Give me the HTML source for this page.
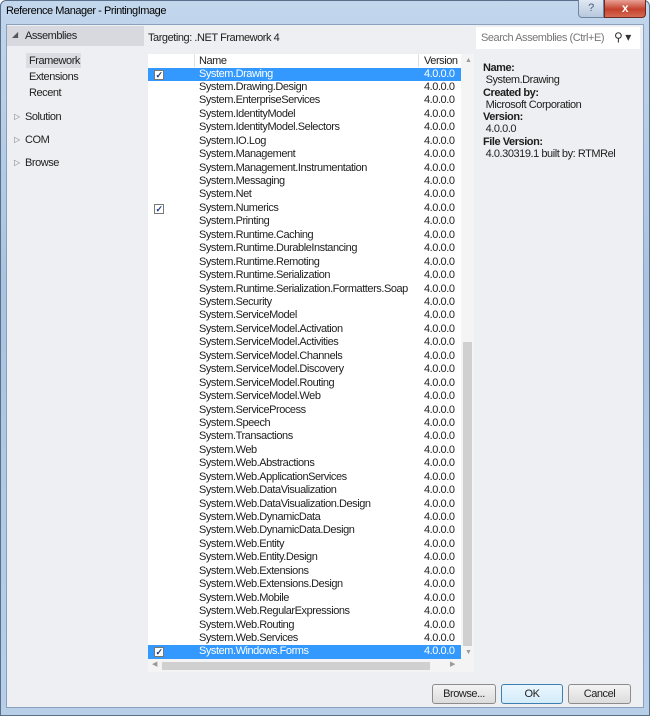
<!DOCTYPE html>
<html><head><meta charset="utf-8"><style>
*{margin:0;padding:0;box-sizing:border-box}
body{width:650px;height:716px;overflow:hidden;font-family:"Liberation Sans",sans-serif;font-size:11px;color:#1e1e1e;letter-spacing:-0.45px}
.frame{position:absolute;left:0;top:0;width:650px;height:716px;background:linear-gradient(#c2d6ec,#a9c3e0 40%,#b8cfe8);border:1px solid #5a6f8a;border-radius:6px 6px 0 0}
.title{position:absolute;left:6px;top:5px;font-size:11px;color:#000}
.help{position:absolute;left:578px;top:0;width:26px;height:18px;background:linear-gradient(#dfe8f3,#b7c8dd);border:1px solid #6e85a3;border-top:none;border-radius:0 0 0 4px;text-align:center;color:#4a5d75;font-size:11px;line-height:17px}
.close{position:absolute;left:604px;top:0;width:42px;height:18px;background:linear-gradient(#e9a196,#c4412c 55%,#d56a52);border:1px solid #6b2a22;border-top:none;border-radius:0 0 4px 0;text-align:center;color:#fff;font-weight:bold;font-size:12px;line-height:17px}
.client{position:absolute;left:6px;top:24px;width:638px;height:684px;background:#eeeff2;border:1px solid #8aa0bd}
.abs{position:absolute}
.row{position:absolute;left:148px;width:313px;height:13.44px;line-height:13.44px}
.row .n{position:absolute;left:51px}
.row .v{position:absolute;left:276px}
.sel{background:#3399ff;color:#fff}
.cb{position:absolute;left:6px;top:2px;width:10px;height:10px;background:#fff;border:1px solid #777;font-size:9px;line-height:8px;text-align:center;color:#1a3a8a;font-weight:bold}
.btn{position:absolute;top:684px;height:20px;border:1px solid #8c8c8c;border-radius:3px;background:linear-gradient(#f4f4f4,#dcdcdc);text-align:center;line-height:18px}
</style></head><body>
<div class="frame"></div>
<div class="title">Reference Manager - PrintingImage</div>
<div class="help">?</div>
<div class="close">x</div>
<div class="client"></div>
<div class="abs" style="left:7px;top:26px;width:137px;height:20px;background:#d7d9df"></div>
<div class="abs" style="left:12px;top:30px;font-size:8px;color:#555">◢</div>
<div class="abs" style="left:25px;top:30px">Assemblies</div>
<div class="abs" style="left:26px;top:53px;width:55px;height:15px;background:#dcdde2"></div>
<div class="abs" style="left:29px;top:55px">Framework</div>
<div class="abs" style="left:29px;top:71px">Extensions</div>
<div class="abs" style="left:29px;top:87px">Recent</div>
<div class="abs" style="left:14px;top:112px;font-size:8px;color:#777">▷</div>
<div class="abs" style="left:25px;top:111px">Solution</div>
<div class="abs" style="left:14px;top:135px;font-size:8px;color:#777">▷</div>
<div class="abs" style="left:25px;top:134px">COM</div>
<div class="abs" style="left:14px;top:158px;font-size:8px;color:#777">▷</div>
<div class="abs" style="left:25px;top:157px">Browse</div>
<div class="abs" style="left:148px;top:32px">Targeting: .NET Framework 4</div>
<div class="abs" style="left:476px;top:27px;width:164px;height:22px;background:#fff"></div>
<div class="abs" style="left:481px;top:32px;color:#777">Search Assemblies (Ctrl+E)</div>
<div class="abs" style="left:614px;top:30px;font-size:12px;color:#333">⚲ ▾</div>
<div class="abs" style="left:148px;top:54px;width:326px;height:618px;background:#fff"></div>
<div class="abs" style="left:194px;top:54px;width:1px;height:13px;background:#e0e0e0"></div>
<div class="abs" style="left:418px;top:54px;width:1px;height:13px;background:#e0e0e0"></div>
<div class="abs" style="left:199px;top:55px">Name</div>
<div class="abs" style="left:424px;top:55px">Version</div>
<div class="abs" style="left:461px;top:54px;width:13px;height:605px;background:#f4f4f4"></div>
<div class="abs" style="left:465px;top:57px;font-size:7px;color:#999">▲</div>
<div class="abs" style="left:465px;top:649px;font-size:7px;color:#999">▼</div>
<div class="abs" style="left:463px;top:342px;width:9px;height:304px;background:#d0d0d0"></div>
<div class="abs" style="left:148px;top:659px;width:326px;height:13px;background:#f4f4f4"></div>
<div class="abs" style="left:162px;top:662px;width:268px;height:8px;background:#d0d0d0"></div>
<div class="abs" style="left:152px;top:660px;font-size:7px;color:#999">◀</div>
<div class="abs" style="left:450px;top:660px;font-size:7px;color:#999">▶</div>
<div id="rows"></div>
<div class="abs" style="left:483px;top:62px;line-height:12.3px">
<b>Name:</b><br>&nbsp;System.Drawing<br><b>Created by:</b><br>&nbsp;Microsoft Corporation<br><b>Version:</b><br>&nbsp;4.0.0.0<br><b>File Version:</b><br>&nbsp;4.0.30319.1 built by: RTMRel</div>
<div class="btn" style="left:432px;width:64px">Browse...</div>
<div class="btn" style="left:501px;width:62px;border-color:#3c7fb1;background:linear-gradient(#eaf6fd,#d3ecfa)">OK</div>
<div class="btn" style="left:568px;width:63px">Cancel</div>
<script>
var n=["System.Drawing","System.Drawing.Design","System.EnterpriseServices","System.IdentityModel","System.IdentityModel.Selectors","System.IO.Log","System.Management","System.Management.Instrumentation","System.Messaging","System.Net","System.Numerics","System.Printing","System.Runtime.Caching","System.Runtime.DurableInstancing","System.Runtime.Remoting","System.Runtime.Serialization","System.Runtime.Serialization.Formatters.Soap","System.Security","System.ServiceModel","System.ServiceModel.Activation","System.ServiceModel.Activities","System.ServiceModel.Channels","System.ServiceModel.Discovery","System.ServiceModel.Routing","System.ServiceModel.Web","System.ServiceProcess","System.Speech","System.Transactions","System.Web","System.Web.Abstractions","System.Web.ApplicationServices","System.Web.DataVisualization","System.Web.DataVisualization.Design","System.Web.DynamicData","System.Web.DynamicData.Design","System.Web.Entity","System.Web.Entity.Design","System.Web.Extensions","System.Web.Extensions.Design","System.Web.Mobile","System.Web.RegularExpressions","System.Web.Routing","System.Web.Services","System.Windows.Forms"];
var h="";n.forEach(function(s,i){var sel=(i==0||i==43),chk=sel||i==10;
h+='<div class="row'+(sel?' sel':'')+'" style="top:'+(67.5+i*13.44)+'px">'+(chk?'<div class="cb">✓</div>':'')+'<span class="n">'+s+'</span><span class="v">4.0.0.0</span></div>';});
document.getElementById("rows").innerHTML=h;
</script>
</body></html>
